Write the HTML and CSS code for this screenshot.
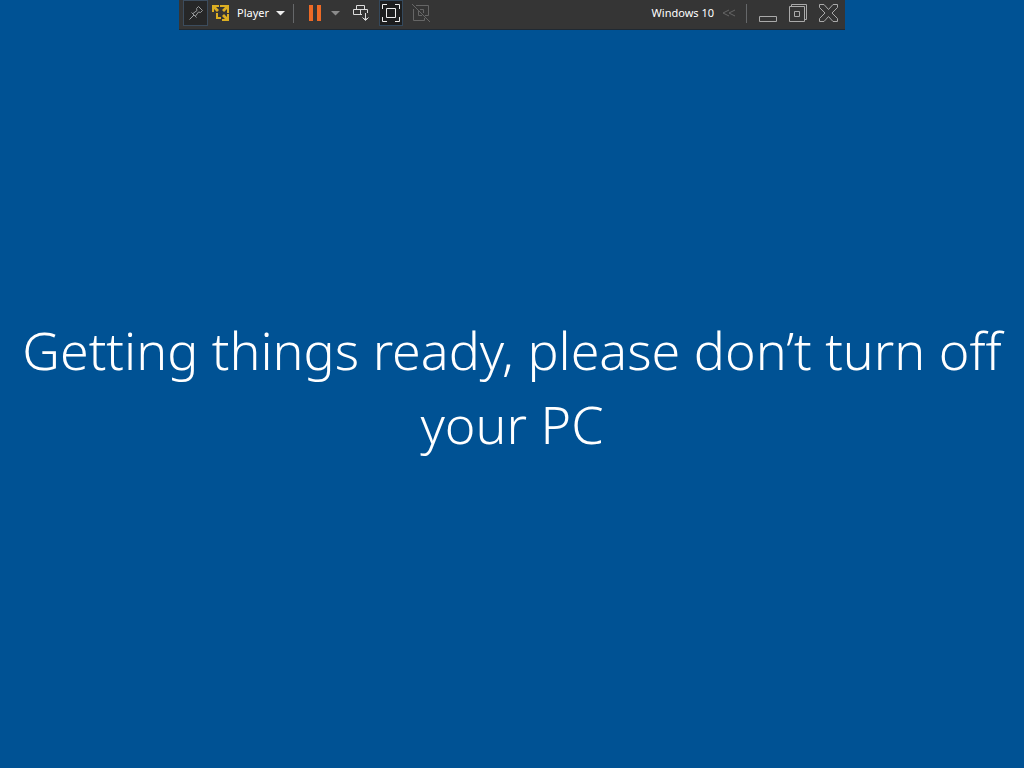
FILE: index.html
```html
<!DOCTYPE html>
<html lang="en">
<head>
<meta charset="utf-8">
<meta name="viewport" content="width=device-width, initial-scale=1">
<title>Windows 10</title>
<link rel="stylesheet" href="styles.css">
</head>
<body>
<header class="toolbar">
  <button class="tool pin" aria-label="Pin toolbar">
    <svg width="16" height="16" viewBox="0 0 16 16" fill="none" stroke="#9a9c9e"><path d="M1.500 14.500 6 10M3.500 7.500 8.500 12.500M5 8.500 9 5.500 8.500 3.500 10.500 1.500 14.500 5.500 12.500 7.500 10.500 7 7.500 11"/></svg>
  </button>
  <button class="tool player">
    <svg width="18" height="18" viewBox="0 0 18 18" fill="#dcae22"><path d="M0 1H7V3H4L7 6 5 8 2 5V8H0ZM8 1H17V9H15V5L12 8 10 6 13 3H8ZM4 9H6V13H9V15H4ZM17 10V17H10V15H13L10 12 12 10 15 13V10Z"/></svg>
    <span>Player</span>
    <svg width="9" height="5" viewBox="0 0 9 5" fill="#eee"><path d="M0 0H9L4.500 4.500Z"/></svg>
  </button>
  <span class="divider"></span>
  <button class="tool pause" aria-label="Pause">
    <svg width="12" height="16" viewBox="0 0 12 16" fill="#ed6a26"><path d="M0 0H4V16H0ZM8 0H12V16H8Z"/></svg>
    <svg width="9" height="5" viewBox="0 0 9 5" fill="#8b8b8b"><path d="M0 0H9L4.500 4.500Z"/></svg>
  </button>
  <button class="tool" aria-label="Send Ctrl+Alt+Del">
    <svg width="18" height="18" viewBox="0 0 18 18" fill="none" stroke="#ddd"><path d="M4.500 5.500V1.500H12.500V5.500M10 10.500H1.500V5.500H15.500V9M8.500 5.500V10M13.500 9V16M10.500 13.500 13.500 16.500 16.500 13.500M12.500 14.500H14.500"/></svg>
  </button>
  <button class="tool fullscreen" aria-label="Exit full screen">
    <svg width="18" height="18" viewBox="0 0 18 18" fill="none" stroke="#eee"><path d="M.5 5V.5H5M13 .5H17.500V5M17.500 13V17.500H13M5 17.500H.5V13M4.500 4.500H13.500V13.500H4.500Z"/></svg>
  </button>
  <button class="tool" aria-label="Unity mode" disabled>
    <svg width="18" height="18" viewBox="0 0 18 18" fill="none" stroke="#666"><path d="M0 0 18 18M4 1.500H16.500V11.500H13M1.500 5V16.500H12.500V14M6.500 6.500V11.500H10M8 5.500H11.500V9"/></svg>
  </button>
  <span class="title">Windows 10</span>
  <button class="tool" aria-label="Collapse toolbar">
    <svg width="14" height="8" viewBox="0 0 14 8" fill="none" stroke="#666"><path d="M7 1 1 4 7 7M13 1 7 4 13 7"/></svg>
  </button>
  <span class="divider"></span>
  <div class="window-controls">
    <button class="tool" aria-label="Minimize">
      <svg width="19" height="18" viewBox="0 0 19 18" fill="none" stroke="#aaa"><path d="M.5 12.500H17.500V17.500H.5Z"/></svg>
    </button>
    <button class="tool" aria-label="Restore">
      <svg width="19" height="18" viewBox="0 0 19 18" fill="none" stroke="#aaa"><path d="M.5 2.500H15.500V17.500H.5ZM2.500 2.500V.5H17.500V15.500H15.500M5.500 7.500H10.500V12.500H5.500Z"/></svg>
    </button>
    <button class="tool" aria-label="Close">
      <svg width="19" height="18" viewBox="0 0 19 18" fill="none" stroke="#aaa"><path d="M.5 .5H5L9.500 5.500 14 .5H18.500V3.500L13 9 18.500 14.500V17.500H14L9.500 12.500 5 17.500H.5V14.500L6 9 .5 3.500Z"/></svg>
    </button>
  </div>
</header>
<main class="screen">
  <h1 class="message">Getting things ready, please don’t turn off your PC</h1>
</main>
</body>
</html>
```
FILE: styles.css
```css
* {
  box-sizing: border-box;
}

body {
  margin: 0;
  min-height: 100vh;
  display: flex;
  flex-direction: column;
  align-items: center;
  background: #005294;
  color: #fff;
  font-family: "Noto Sans", "Open Sans", sans-serif;
}

.toolbar {
  width: 100%;
  max-width: 666px;
  height: 30px;
  padding: 0 7px 3px 4px;
  display: flex;
  align-items: center;
  background: #353535;
  border-bottom: 1px solid #202932;
  font-size: 11px;
  line-height: 16px;
}

.tool {
  display: flex;
  align-items: center;
  flex: none;
  margin: 0;
  padding: 0;
  border: 0;
  background: none;
  color: inherit;
  font: inherit;
}

.tool svg {
  display: block;
}

.pin {
  width: 25px;
  height: 26px;
  justify-content: center;
  background: #262728;
  border: 1px solid #3c4c5d;
}

.player {
  gap: 7px;
  margin: 0 8px 0 4px;
}

.divider {
  width: 1px;
  height: 19px;
  background: #66686a;
}

.pause {
  gap: 10px;
  margin: 0 12px 0 15px;
}

.fullscreen {
  width: 24px;
  height: 26px;
  margin: 0 9px;
  justify-content: center;
  background: #1d1e1f;
  border: 1px solid #34495d;
}

.title {
  margin: 0 8px 0 auto;
}

.window-controls {
  display: flex;
  gap: 11px;
  margin-left: 12px;
}

.toolbar > .title ~ .divider {
  margin-left: 10px;
}

.screen {
  flex: 1;
  width: 100%;
  padding: 0 16px 24px;
  display: flex;
  align-items: center;
  justify-content: center;
}

.message {
  margin: 0;
  font-size: 52px;
  line-height: 74px;
  font-weight: 300;
  text-align: center;
}
```
